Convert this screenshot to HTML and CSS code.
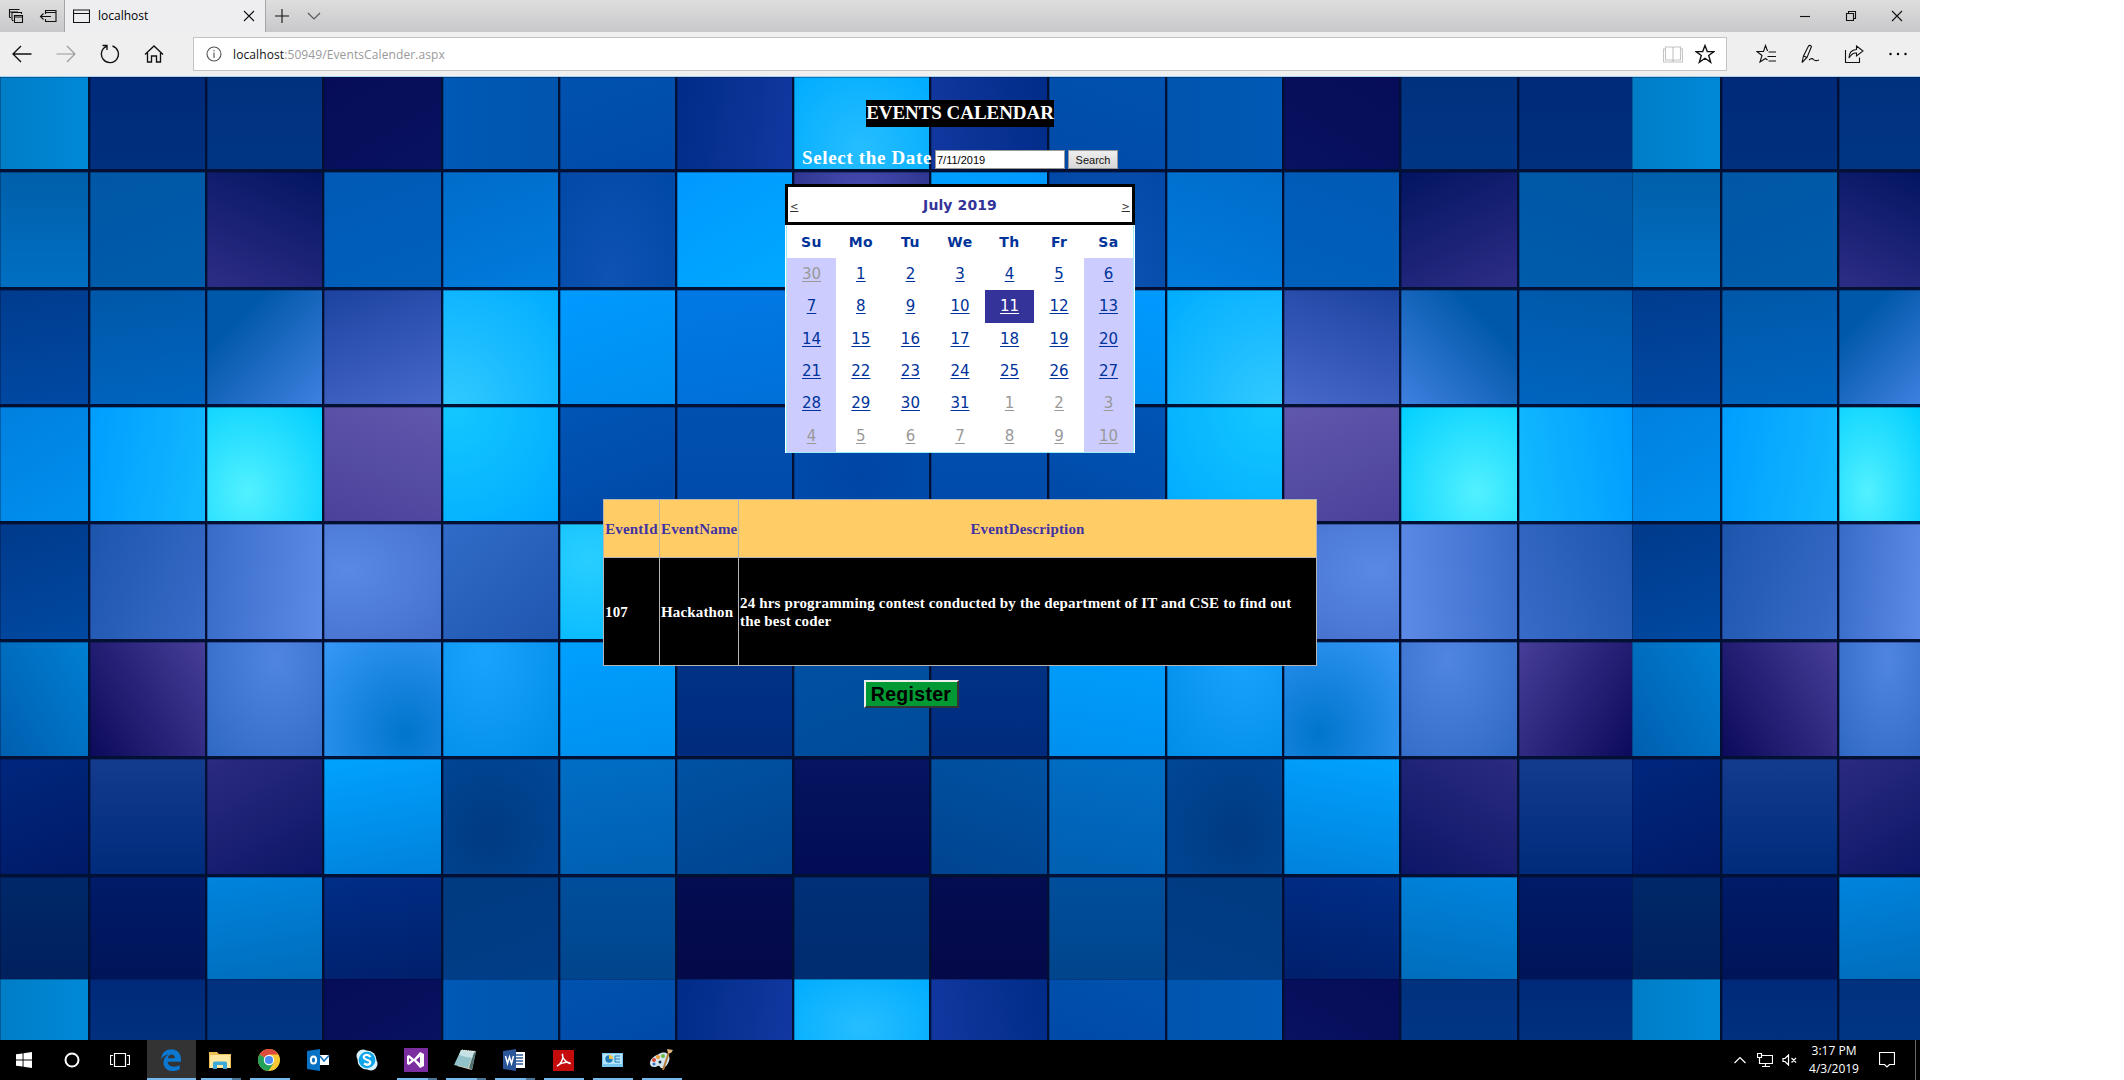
FILE: index.html
```html
<!DOCTYPE html>
<html lang="en">
<head>
<meta charset="utf-8">
<title>localhost</title>
<link rel="stylesheet" href="styles.css">
</head>
<body>
<div class="desktop">
  <header class="tabbar">
    <div class="tab-tools">
      <svg width="16" height="16" viewBox="0 0 16 16"><path class="ln" d="M1.5 9.500V1.500H11.500M1.500 9.500H3M4 12V4.500H13.500V6M4 12.500H5.500M1.500 4H10M6.500 7.500H14.500V14.500H6.500ZM6.500 9H14.500"/></svg>
      <svg width="18" height="16" viewBox="0 0 18 16"><path class="ln" d="M6.500 6V2.500H17V13.500H6.500V11M6.500 4.500H17M1.500 8.500H12M4.500 5.500L1.500 8.500L4.500 11.500"/></svg>
    </div>
    <div class="tab">
      <svg width="17" height="14" viewBox="0 0 17 14"><path class="ln" d="M.5 1H16.500V13.500H.5ZM.5 4.500H16.500"/></svg>
      <span class="tab-title">localhost</span>
      <svg width="12" height="12" viewBox="0 0 12 12"><path class="ln" d="M1 1L11 11M11 1L1 11"/></svg>
    </div>
    <div class="tab-add">
      <svg width="14" height="14" viewBox="0 0 14 14"><path class="ln" d="M7 0V14M0 7H14"/></svg>
      <svg width="14" height="8" viewBox="0 0 14 8"><path class="ln soft" d="M1 1L7 7L13 1"/></svg>
    </div>
    <div class="window-buttons">
      <svg width="12" height="12" viewBox="0 0 12 12"><path class="ln" d="M1 6.500H11"/></svg>
      <svg width="12" height="12" viewBox="0 0 12 12"><path class="ln" d="M1.500 3.500H8.500V10.500H1.500ZM3.500 3V1.500H10.500V8.500H9"/></svg>
      <svg width="12" height="12" viewBox="0 0 12 12"><path class="ln" d="M1 1L11 11M11 1L1 11"/></svg>
    </div>
  </header>

  <div class="toolbar">
    <nav class="nav-buttons">
      <svg width="20" height="18" viewBox="0 0 20 18"><path class="ln mid" d="M19.500 9H1M9 1L1 9L9 17"/></svg>
      <svg width="20" height="18" viewBox="0 0 20 18"><path class="ln dim" d="M.5 9H19M11 1L19 9L11 17"/></svg>
      <svg width="20" height="20" viewBox="0 0 20 20"><path class="ln mid" d="M12.500 2A8.500 8.500 0 1 1 6.500 2.300M2.500 1.500H7V6"/></svg>
      <svg width="20" height="20" viewBox="0 0 20 20"><path class="ln mid" d="M1 10.500L10 2L19 10.500M3.500 9V18H7.500V12H12.500V18H16.500V9"/></svg>
    </nav>
    <div class="address">
      <svg width="16" height="16" viewBox="0 0 16 16"><circle class="ln soft" cx="8" cy="8" r="7"/><path class="ln soft" d="M8 6.500V12M8 4V5.200"/></svg>
      <span class="url"><b>localhost</b>:50949/EventsCalender.aspx</span>
      <svg width="20" height="18" viewBox="0 0 20 18"><path class="ln pale" d="M2.500 2H9L10 3L11 2H17.500V15H11L10 16L9 15H2.500ZM10 3V16M2.500 4H.5V17H19.500V4H17.500"/></svg>
      <svg class="star" width="20" height="20" viewBox="0 0 20 20"><path class="ln mid" d="M10 1.500L12.300 7.600H19L13.700 11.500L15.700 18.300L10 14.300L4.300 18.300L6.300 11.500L1 7.600H7.700Z"/></svg>
    </div>
    <div class="tools">
      <svg width="20" height="20" viewBox="0 0 20 20"><path class="ln" d="M12 6.500H11.300L9.500 1.500L7.500 7.500H1L6 11.500L4 18L9.500 14.500L11.500 16M12.500 8H20M11.500 12.500H20M12.500 17H20"/></svg>
      <svg width="20" height="20" viewBox="0 0 20 20"><path class="ln" d="M2 18.500L3.500 12L8.500 2Q10 .5 11.500 2.500L7 13.500L2 18.500M3.500 12L7 13.500M9 16Q12 13.500 13.500 15.500T19 16"/></svg>
      <svg width="20" height="20" viewBox="0 0 20 20"><path class="ln" d="M1.500 6V18.500H15.500V13.500M12.500 2L19 7L12.500 12V9Q8 8.500 5 14Q5 6 12.500 5.500Z"/></svg>
      <svg width="20" height="20" viewBox="0 0 20 20"><circle cx="2.500" cy="10" r="1.200"/><circle cx="10" cy="10" r="1.200"/><circle cx="17.500" cy="10" r="1.200"/></svg>
    </div>
  </div>

  <main class="page">
    <div class="mosaic" id="mosaic"></div>
    <form class="content">
      <h1 class="title">EVENTS CALENDAR</h1>
      <div class="picker">
        <label for="date">Select the Date</label>
        <input id="date" type="text" value="7/11/2019">
        <button type="button" class="search">Search</button>
      </div>

      <div class="calendar">
        <div class="cal-head"><a href="#">&lt;</a><strong>July 2019</strong><a href="#">&gt;</a></div>
        <table class="days">
          <tr><th>Su</th><th>Mo</th><th>Tu</th><th>We</th><th>Th</th><th>Fr</th><th>Sa</th></tr>
          <tr><td class="out"><a>30</a></td><td><a>1</a></td><td><a>2</a></td><td><a>3</a></td><td><a>4</a></td><td><a>5</a></td><td><a>6</a></td></tr>
          <tr><td><a>7</a></td><td><a>8</a></td><td><a>9</a></td><td><a>10</a></td><td class="picked"><a>11</a></td><td><a>12</a></td><td><a>13</a></td></tr>
          <tr><td><a>14</a></td><td><a>15</a></td><td><a>16</a></td><td><a>17</a></td><td><a>18</a></td><td><a>19</a></td><td><a>20</a></td></tr>
          <tr><td><a>21</a></td><td><a>22</a></td><td><a>23</a></td><td><a>24</a></td><td><a>25</a></td><td><a>26</a></td><td><a>27</a></td></tr>
          <tr><td><a>28</a></td><td><a>29</a></td><td><a>30</a></td><td><a>31</a></td><td class="out"><a>1</a></td><td class="out"><a>2</a></td><td class="out"><a>3</a></td></tr>
          <tr><td class="out"><a>4</a></td><td class="out"><a>5</a></td><td class="out"><a>6</a></td><td class="out"><a>7</a></td><td class="out"><a>8</a></td><td class="out"><a>9</a></td><td class="out"><a>10</a></td></tr>
        </table>
      </div>

      <table class="events">
        <tr><th>EventId</th><th>EventName</th><th>EventDescription</th></tr>
        <tr><td>107</td><td>Hackathon</td><td>24 hrs programming contest conducted by the department of IT and CSE to find out<br>the best coder</td></tr>
      </table>
      <button type="button" class="register">Register</button>
    </form>
  </main>

  <footer class="taskbar">
    <div class="apps">
      <div class="app"><svg width="16" height="16" viewBox="0 0 16 16" fill="#fff"><path d="M0 2.300L6.600 1.400V7.500H0ZM7.500 1.200L16 0V7.500H7.500ZM0 8.400H6.600V14.600L0 13.700ZM7.500 8.400H16V16L7.500 14.800Z"/></svg></div>
      <div class="app"><svg width="16" height="16" viewBox="0 0 16 16"><circle cx="8" cy="8" r="6.500" fill="none" stroke="#fff" stroke-width="2"/></svg></div>
      <div class="app"><svg width="20" height="16" viewBox="0 0 20 16"><path class="ln white" d="M4.500 1.500H15.500V14.500H4.500ZM3 3.500H.5V12.500H3M17 3.500H19.500V12.500H17"/></svg></div>
      <div class="app active"><svg width="20" height="22" viewBox="0 0 20 22"><path fill="#0b78d1" d="M0 10.500C.8 4 4.500.3 10.200.3C16.500.3 20 5 20 10.200V12.800H6.700C7 18.500 14.500 18.600 18.700 16V20.300C12 24 2.500 22 2.500 13.500C2.500 9.500 4.500 6.800 7.800 5.500C5 5.500 2 7 0 10.500ZM6.900 9.200H14C14 4.300 7.500 4.300 6.900 9.200Z"/></svg></div>
      <div class="app run many"><svg width="22" height="19" viewBox="0 0 22 19"><path fill="#eabf56" d="M0 1H8L10 3H22V17H0Z"/><path fill="#ffe9a0" d="M1 4H21V17H1Z"/><path fill="#3ca9d8" d="M4 18V12Q4 10.500 5.500 10.500H16.500Q18 10.500 18 12V18H14V14H8V18Z"/></svg></div>
      <div class="app run"><svg width="22" height="22" viewBox="0 0 22 22"><circle cx="11" cy="11" r="11" fill="#f8c934"/><path fill="#dd4b3e" d="M11 11L1.500 5.500A11 11 0 0 1 20.500 5.500H11Z"/><path fill="#23a05a" d="M1.500 5.500A11 11 0 0 0 10.500 22L15.700 13.700L11 11Z"/><circle cx="11" cy="11" r="5.200" fill="#fff"/><circle cx="11" cy="11" r="4.100" fill="#4a8bf5"/></svg></div>
      <div class="app"><svg width="23" height="22" viewBox="0 0 23 22"><path fill="#0a72c4" d="M0 2L13 0V22L0 20Z"/><path fill="#fff" d="M13 6H22V16H13Z"/><path d="M13 7L17 12L22 6.500" fill="none" stroke="#0a72c4" stroke-width="1.500"/><ellipse cx="6.500" cy="11" rx="2.600" ry="3.500" fill="none" stroke="#fff" stroke-width="2"/></svg></div>
      <div class="app"><svg width="22" height="22" viewBox="0 0 22 22"><g fill="#d8f3ff"><circle cx="7" cy="7" r="6.500"/><circle cx="15" cy="15" r="6.500"/><circle cx="11" cy="11" r="9.500"/></g><circle cx="11" cy="11" r="8.300" fill="#10a5e8"/><path d="M14.500 8Q13 5.500 10 6Q7 6.500 8 9Q9 10.500 12 11.300Q15 12.500 14 14.500Q12 17 8 14.500" fill="none" stroke="#fff" stroke-width="2.200"/></svg></div>
      <div class="app run many"><svg width="24" height="24" viewBox="0 0 24 24"><path fill="#7b2c9e" d="M0 0H24V24H0Z"/><path fill="#fff" fill-rule="evenodd" d="M3 8L5 7L10 11L16 4L20 6V18L16 20L10 13L5 17L3 16ZM5 10V14L7.500 12ZM12 12L16 15.500V8.500Z"/></svg></div>
      <div class="app run many"><svg width="23" height="22" viewBox="0 0 23 22"><path fill="#e0d7bb" d="M8 1L22 2L18 21L3 17Z"/><path fill="#4c7277" d="M20 3L22 2L18 21L15 19Z"/><path fill="#91c1c9" d="M7 1L20 3L14 19L0 16Z"/><path fill="#c6e2e4" d="M7 1L20 3L18 9Q11 8 5 6Z"/><path d="M8 1L21 3" stroke="#fff" stroke-dasharray="1 1"/></svg></div>
      <div class="app run many"><svg width="22" height="22" viewBox="0 0 22 22"><path fill="#fff" d="M12 3H22V19H12Z"/><path d="M13 6H20M13 9H20M13 12H20M13 15H20" stroke="#2a5699" stroke-width="1.500"/><path fill="#2a5699" d="M0 2L13 0V22L0 20Z"/><path d="M2.500 7L4.500 14.500L6.500 8L8.500 14.500L10.500 7" fill="none" stroke="#fff" stroke-width="1.500"/></svg></div>
      <div class="app run"><svg width="21" height="21" viewBox="0 0 21 21"><path fill="#c40c0c" d="M0 0H21V21H0Z"/><path d="M4 16C7 15 11 9 9.500 4.500C8.500 5 11 12 17 13.500C18 12 10 11 4 16Z" fill="none" stroke="#fff" stroke-width="1.400"/></svg></div>
      <div class="app run"><svg width="21" height="16" viewBox="0 0 21 16"><path fill="#79c6ef" d="M0 1H21V15H0Z"/><path fill="#b5e5fb" d="M1 2H20V12H1Z"/><circle cx="7" cy="7" r="3.700" fill="#237ab9"/><path fill="#f6c342" d="M7 7V3A4 4 0 0 1 11 7Z"/><path d="M13 4H18M13 7H18M13 10H18M13 4V10" stroke="#237ab9"/></svg></div>
      <div class="app run"><svg width="24" height="24" viewBox="0 0 24 24"><path fill="#d4e5ee" d="M10 6C17 2 22 7 20 13C18 19 13 22 11 19C10 16 8 19 5 19C-1 19-1 10 10 6Z"/><circle cx="5" cy="12" r="2" fill="#d94a35"/><circle cx="9" cy="9" r="2" fill="#ef9b34"/><circle cx="14" cy="8" r="2" fill="#69b846"/><circle cx="5" cy="16" r="1.500" fill="#3277c6"/><circle cx="11" cy="14" r="1.500" fill="#18314c"/><path d="M14 22L20 4" stroke="#b87a37" stroke-width="2"/><path fill="#e2b77d" d="M19 5L18 1L24 2L22 5Z"/></svg></div>
    </div>
    <div class="tray">
      <svg width="14" height="8" viewBox="0 0 14 8"><path class="ln white" d="M1.500 7L7 1.500L12.500 7"/></svg>
      <svg width="16" height="14" viewBox="0 0 16 14"><path class="ln white" d="M4.500 2.500H15.500V10.500H2.500V5M8.500 10.500V13.500M5 13.500H13M.5.5H4.500V4.500H.5Z"/></svg>
      <svg width="16" height="12" viewBox="0 0 16 12"><path class="ln white" d="M1 4.500H3L6.500 1V11L3 7.500H1ZM9.500 4L14 8.500M14 4L9.500 8.500"/></svg>
      <div class="clock"><span>3:17 PM</span><span>4/3/2019</span></div>
      <svg width="16" height="16" viewBox="0 0 16 16"><path class="ln white" d="M.5.5H15.500V12.500H10.500L8 15L5.500 12.500H.5Z"/></svg>
      <i class="peek"></i>
    </div>
  </footer>
</div>
<script src="mosaic.js"></script>
</body>
</html>
```

FILE: styles.css
```css
* { box-sizing: border-box; }
body {
  margin: 0;
  background: #fff;
  font-family: "Open Sans", "Noto Sans", sans-serif;
  overflow: hidden;
}
svg { display: block; flex: none; }
.ln { fill: none; stroke: #111; stroke-width: 1.1; }
.ln.mid { stroke-width: 1.35; }
.ln.soft { stroke: #555; }
.ln.dim { stroke: #999; }
.ln.pale { stroke: #c4c4c4; }
.ln.white { stroke: #fff; stroke-width: 1.2; }

.desktop {
  width: 1920px;
  height: 1080px;
  display: grid;
  grid-template-rows: 32px 45px 963px 40px;
}

.tabbar {
  display: flex;
  background: linear-gradient(#dededf, #c8c8ca);
}
.tab-tools {
  width: 65px;
  padding-left: 8px;
  display: flex;
  align-items: center;
  gap: 15px;
  border-right: 1px solid #a5a5a7;
}
.tab {
  width: 201px;
  padding: 0 10px 0 8px;
  display: flex;
  align-items: center;
  background: #eeeef0;
  border-right: 1px solid #a5a5a7;
}
.tab-title { flex: 1; margin-left: 8px; font-size: 12px; line-height: 16px; }
.tab-add { display: flex; align-items: center; gap: 18px; margin-left: 9px; }
.window-buttons {
  margin-left: auto;
  margin-right: 17px;
  display: flex;
  align-items: center;
  gap: 34px;
}

.toolbar {
  display: flex;
  align-items: center;
  background: #efeff0;
  border-bottom: 1px solid #a9d3f2;
}
.nav-buttons {
  width: 193px;
  padding-left: 12px;
  display: flex;
  align-items: center;
  gap: 24px;
}
.address {
  width: 1534px;
  height: 34px;
  padding: 0 11px 0 12px;
  display: flex;
  align-items: center;
  background: #fff;
  border: 1px solid #c3c3c5;
}
.url { flex: 1; margin-left: 11px; font-size: 12px; color: #999; letter-spacing: .1px; }
.url b { font-weight: 400; color: #111; }
.star { margin-left: 12px; }
.tools { display: flex; gap: 24px; margin-left: 29px; }

.page { position: relative; overflow: hidden; background: #004ca8; }
.mosaic {
  position: absolute;
  inset: 0;
  display: grid;
  grid-template-columns: 90px 117px 117px 119px 117px 117px 117px 137px 118px 118px 117px 117px 118px 113px 90px 117px 81px;
  grid-template-rows: 95px 118px 117px 117px 118px 117px 118px 102px 61px;
}
.tile {
  border: 0 solid rgba(2, 8, 32, .86);
  border-right-width: 2.500px;
  border-bottom-width: 3px;
  box-shadow: inset 0 1px rgba(2, 8, 40, .3), inset 1px 0 rgba(2, 8, 40, .3);
}
.tile.seam-right, .tile.edge { border-right-width: 0; }
.tile.seam-bottom { border-bottom-width: 0; }

.content {
  position: relative;
  display: flex;
  flex-direction: column;
  align-items: center;
  font-family: "Liberation Serif", serif;
}
.title {
  margin: 23px 0 0;
  width: 188px;
  height: 27px;
  line-height: 26px;
  background: #000;
  color: #fff;
  font-size: 19px;
  font-weight: 700;
  letter-spacing: -.05px;
  text-align: center;
  white-space: nowrap;
}
.picker {
  margin-top: 18px;
  height: 27px;
  width: 316px;
  display: flex;
  align-items: flex-end;
}
.picker label {
  width: 133px;
  height: 27px;
  color: #fff;
  font-size: 19px;
  font-weight: 700;
  line-height: 25px;
  letter-spacing: .65px;
  white-space: nowrap;
}
.picker input {
  width: 130px;
  height: 19px;
  margin: 0 3px 3px 0;
  padding: 0 1px;
  border: 1px solid #999;
  font: 11px "Liberation Sans", sans-serif;
}
.search {
  width: 50px;
  height: 19px;
  margin-bottom: 3px;
  padding: 0;
  border: 1px solid #999;
  background: linear-gradient(#eee, #d8d8d8);
  color: #111;
  font: 11px "Liberation Sans", sans-serif;
}

.calendar {
  width: 350px;
  height: 269px;
  margin-top: 12px;
  background: #fff;
  color: #003399;
  font-family: "DejaVu Sans", sans-serif;
}
.cal-head {
  height: 41px;
  padding: 0 2px;
  display: flex;
  align-items: center;
  justify-content: space-between;
  border: 3px solid #000;
  color: #333399;
}
.cal-head strong { font-size: 14px; letter-spacing: .1px; }
.cal-head a { padding-top: 4px; font-size: 10px; color: #333; }
.days {
  width: 348px;
  height: 228px;
  margin: 0 auto;
  border-collapse: collapse;
  table-layout: fixed;
  border: 1px solid #a0eef5;
  border-top: 0;
  text-align: center;
}
.days th, .days td { padding: 0; }
.days th { height: 33px; font-size: 14px; letter-spacing: .4px; }
.days td { font-size: 15px; }
.days a { text-decoration: underline; text-underline-offset: 2px; text-decoration-thickness: 1px; }
.days td:first-child, .days td:last-child { background: #ccccff; }
.days td.out { color: #999; }
.days td.picked { background: #333399; color: #fff; }

.events {
  width: 714px;
  height: 167px;
  margin-top: 46px;
  border-collapse: collapse;
  table-layout: fixed;
  font-size: 15px;
  font-weight: 700;
  line-height: 18px;
  letter-spacing: .15px;
}
.events th, .events td { border: 1px solid #b5b5b5; padding: 1px; white-space: nowrap; }
.events th { height: 58px; background: #ffcc66; color: #3f33a4; }
.events th:nth-child(1) { width: 56px; }
.events th:nth-child(2) { width: 79px; }
.events td { background: #000; color: #fff; text-align: left; }
.register {
  width: 95px;
  height: 28px;
  margin: 14px 98px 0 0;
  padding: 0;
  border: 2px outset #ddd;
  border-color: #eee #888 #888 #eee;
  background: #009933;
  color: #000;
  font: 700 19.500px/22px "Liberation Sans", sans-serif;
  letter-spacing: .3px;
}

.taskbar { display: flex; justify-content: space-between; background: #000; }
.apps { display: flex; }
.app {
  width: 49px;
  padding-right: 1px;
  display: flex;
  align-items: center;
  justify-content: center;
  background: no-repeat bottom center / 40px 2px;
}
.app:nth-child(2) { padding-right: 3px; }
.app:nth-child(3) { padding-right: 5px; }
.active { background-color: #333; background-image: linear-gradient(#76b9ed, #76b9ed); background-size: 100% 2px; }
.run { background-image: linear-gradient(#76b9ed, #76b9ed); }
.many { background-image: linear-gradient(90deg, #76b9ed 31px, #4a7698 31px); }
.tray { display: flex; align-items: center; color: #fff; }
.tray svg + svg { margin-left: 9px; }
.tray svg:first-child { margin-right: 1px; }
.clock {
  width: 72px;
  display: flex;
  flex-direction: column;
  align-items: center;
  font-size: 12px;
  line-height: 18px;
}
.clock + svg { margin-left: 9px; }
.peek { width: 1px; height: 40px; margin: 0 4px 0 20px; background: #666; }
```

FILE: mosaic.js
```js
// Left half plus the centre column; the right half mirrors it.
// Linear tile: "angle from to [stop]"; glow tile: "@x y inner outer".
const rows = [
  ["90 #007dc6 #0089d8", "180 #00297a #00307f", "180 #00317f #003585", "150 #060c58 #08125f", "90 #0059b5 #0055ad", "160 #0052ae #004aa8", "100 #002c88 #1238a0", "@50 80 #26beff #00acff"],
  ["180 #005faa #006fc2", "160 #0057a5 #005cac", "205 #021561 #2e2d86", "160 #0059b5 #0061bd", "160 #006cca #007cdd", "@45 95 #0f53b3 #0048a6", "150 #0099ff #00a9ff", "@50 25 #474bb0 #263086"],
  ["170 #003c8e #0049a4", "170 #0057a8 #0065bf", "135 #0058aa #3f80df 25", "160 #1c43a0 #4868ca", "@5 110 #33cbff #00acff", "160 #009aff #008eee", "170 #0079e5 #0070d8", "180 #004cac #0046a4"],
  ["150 #0080df #0090ee", "100 #009dff #13baff", "@35 75 #52f1ff #00ceff", "200 #6058ac #4b419b", "@10 0 #13c8ff #00aaff", "160 #0055b4 #0048a7", "180 #0050b0 #004aa9", "@50 60 #0045a4 #004dad"],
  ["160 #003a8b #0049a2", "110 #1d55ad #396bc8", "95 #386bc8 #5c8be7", "@20 40 #5889e5 #446fcc", "140 #306cc8 #1f56b0", "@25 30 #29ceff #00b7ff", "180 #0090e9 #0090e9", "180 #004c9c #004c9c"],
  ["60 #005eaf #007fd2", "60 #0c0a5a #463e98", "@60 15 #5086e2 #2f68c2", "@70 80 #0075cc #3798f8", "@35 10 #18a3ff #008de6", "170 #00a0ff #0090ef", "180 #003486 #002b7d", "160 #0051a3 #004b9a"],
  ["160 #00277d #001a68", "180 #133b8e #002b7b", "150 #2b2b80 #0c1667", "170 #00a2ff #0082db", "@40 65 #003a82 #004897", "170 #006ec5 #005fb1", "160 #0052a3 #004490", "180 #05155f #020c57"],
  ["180 #002869 #00205d", "180 #001b68 #001459", "170 #0084de #006dbb", "170 #002e87 #001f6b", "160 #003a80 #003e88", "180 #004e9c #00458c", "180 #040d52 #040948", "180 #003078 #002c70"]
];
rows.push(rows[0]);

function paint(spec, mirrored) {
  const [a, b, c, d] = spec.split(" ");
  if (a[0] === "@") {
    const x = Number(a.slice(1));
    return `radial-gradient(ellipse at ${mirrored ? 100 - x : x}% ${b}%, ${c}, ${d})`;
  }
  const stop = spec.split(" ")[3] || 0;
  return `linear-gradient(${mirrored ? -a : a}deg, ${b} ${stop}%, ${c})`;
}

const mosaic = document.getElementById("mosaic");
rows.forEach((row, r) => {
  for (let col = 0; col < 17; col++) {
    const c = col % 14;
    const mirrored = c > 7;
    const tile = document.createElement("div");
    tile.className = "tile"
      + (c === 13 ? " seam-right" : "")
      + (col === 16 ? " edge" : "")
      + (r >= 7 ? " seam-bottom" : "");
    tile.style.background = paint(row[mirrored ? 14 - c : c], mirrored) + " no-repeat padding-box";
    mosaic.append(tile);
  }
});
```
